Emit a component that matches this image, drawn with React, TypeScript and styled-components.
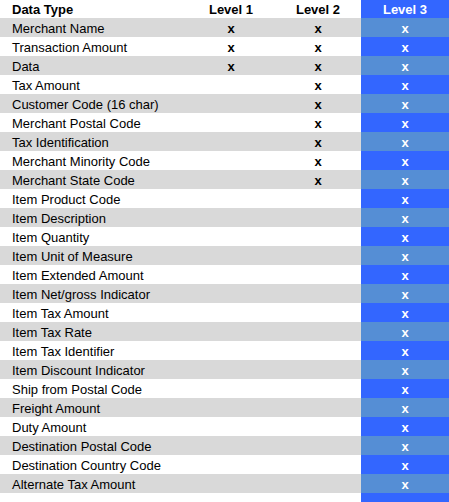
import React from 'react';
import styled, { createGlobalStyle } from 'styled-components';

const GlobalStyle = createGlobalStyle`
  body {
    margin: 0;
    background: #fff;
    font-family: Arial, 'Liberation Sans', sans-serif;
  }
`;

const Table = styled.div`
  width: 449px;
  height: 502px;
  overflow: hidden;
  font-size: 13px;
  color: #000;
`;

const Row = styled.div<{ $shaded?: boolean; $header?: boolean }>`
  display: grid;
  grid-template-columns: 187px 88px 86px 88px;
  height: ${(p) => (p.$header ? '18px' : '19px')};
  line-height: ${(p) => (p.$header ? '19px' : '21px')};
  background: ${(p) => (p.$shaded ? '#d9d9d9' : '#fff')};
  font-weight: ${(p) => (p.$header ? 'bold' : 'normal')};
  overflow: hidden;
`;

const NameCell = styled.div`
  padding-left: 12px;
  white-space: nowrap;
  overflow: hidden;
`;

const MarkCell = styled.div`
  text-align: center;
  font-weight: bold;
`;

const BlueCell = styled.div<{ $shaded?: boolean }>`
  text-align: center;
  font-weight: bold;
  color: #fff;
  background: ${(p) => (p.$shaded ? '#558ed5' : '#3366ff')};
`;

const rows: [string, number][] = [
  ['Merchant Name', 1],
  ['Transaction Amount', 1],
  ['Data', 1],
  ['Tax Amount', 2],
  ['Customer Code (16 char)', 2],
  ['Merchant Postal Code', 2],
  ['Tax Identification', 2],
  ['Merchant Minority Code', 2],
  ['Merchant State Code', 2],
  ['Item Product Code', 3],
  ['Item Description', 3],
  ['Item Quantity', 3],
  ['Item Unit of Measure', 3],
  ['Item Extended Amount', 3],
  ['Item Net/gross Indicator', 3],
  ['Item Tax Amount', 3],
  ['Item Tax Rate', 3],
  ['Item Tax Identifier', 3],
  ['Item Discount Indicator', 3],
  ['Ship from Postal Code', 3],
  ['Freight Amount', 3],
  ['Duty Amount', 3],
  ['Destination Postal Code', 3],
  ['Destination Country Code', 3],
  ['Alternate Tax Amount', 3],
];

const App: React.FC = () => (
  <>
    <GlobalStyle />
    <Table>
      <Row $header>
        <NameCell>Data Type</NameCell>
        <MarkCell>Level 1</MarkCell>
        <MarkCell>Level 2</MarkCell>
        <BlueCell>Level 3</BlueCell>
      </Row>
      {rows.map(([name, level], i) => {
        const shaded = i % 2 === 0;
        return (
          <Row key={name} $shaded={shaded}>
            <NameCell>{name}</NameCell>
            <MarkCell>{level <= 1 ? 'x' : ''}</MarkCell>
            <MarkCell>{level <= 2 ? 'x' : ''}</MarkCell>
            <BlueCell $shaded={shaded}>x</BlueCell>
          </Row>
        );
      })}
      <Row>
        <NameCell />
        <MarkCell />
        <MarkCell />
        <BlueCell />
      </Row>
    </Table>
  </>
);

export default App;
